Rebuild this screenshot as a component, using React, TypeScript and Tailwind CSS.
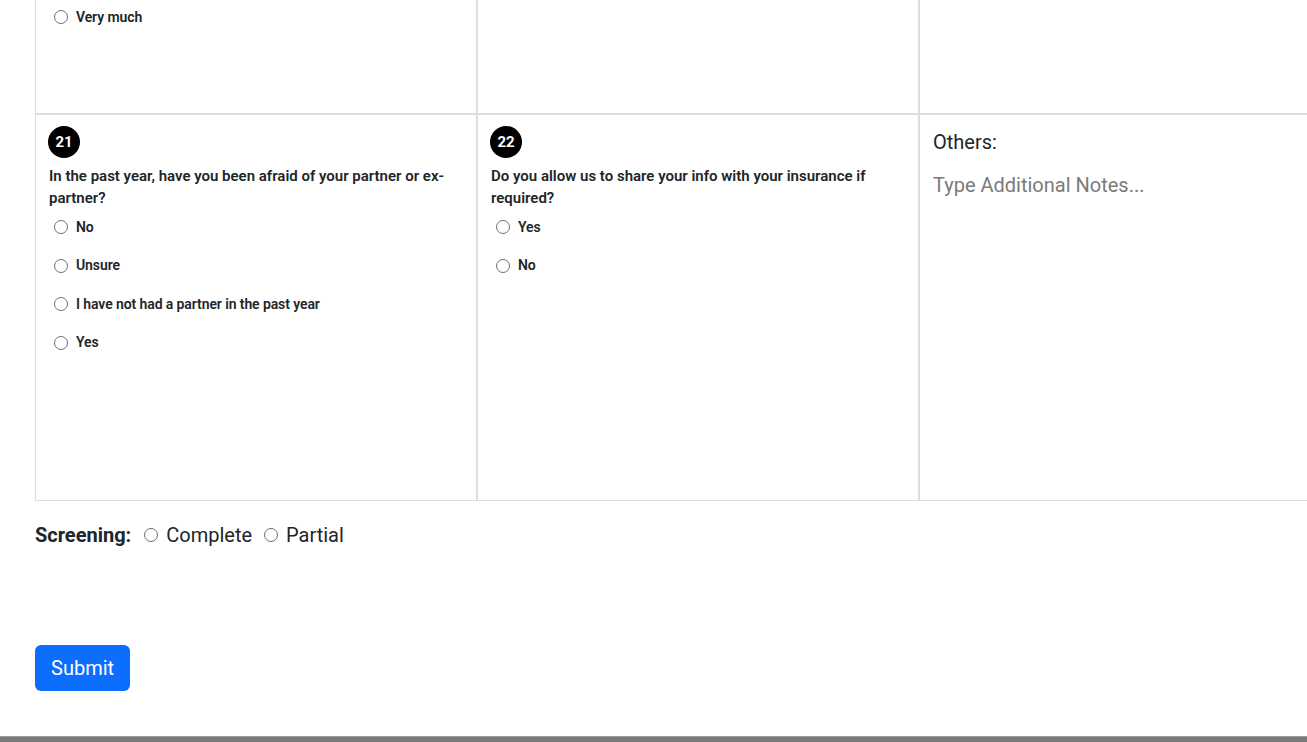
import React from 'react';

const font = { fontFamily: 'Roboto, "Liberation Sans", sans-serif' };

function Radio({ label }: { label: string }) {
  return (
    <label className="flex items-center h-[22px] pl-[6px] gap-[8px]">
      <span className="w-[14px] h-[14px] rounded-full border border-[#6f6f6f] bg-white shrink-0" />
      <span className="text-[14px] font-semibold text-[#212529] tracking-[-0.1px]">{label}</span>
    </label>
  );
}

function Badge({ n }: { n: number }) {
  return (
    <div className="w-[32px] h-[32px] rounded-full bg-black text-white flex items-center justify-center text-[15px] font-bold">
      {n}
    </div>
  );
}

function Question({ n, text, options }: { n: number; text: string; options: string[] }) {
  return (
    <div className="border border-[#dedede] h-[387px] pt-[11px] px-[12px]">
      <Badge n={n} />
      <p className="mt-[7px] pl-px text-[15px] leading-[22px] font-semibold text-[#212529] pr-[20px]">{text}</p>
      <div className="mt-[7px] flex flex-col gap-y-[16.5px]">
        {options.map((o) => (
          <Radio key={o} label={o} />
        ))}
      </div>
    </div>
  );
}

export default function App() {
  return (
    <div style={font} className="w-[1307px] h-[742px] overflow-hidden flex flex-col bg-white text-[#212529]">
      <div className="ml-[35px] w-[1326px]">
        <div className="grid grid-cols-3">
          <div className="border border-t-0 border-[#dedede] h-[114px] pt-[6px] px-[12px]">
            <Radio label="Very much" />
          </div>
          <div className="border border-t-0 border-[#dedede] h-[114px]" />
          <div className="border border-t-0 border-[#dedede] h-[114px]" />
          <Question
            n={21}
            text="In the past year, have you been afraid of your partner or ex-partner?"
            options={['No', 'Unsure', 'I have not had a partner in the past year', 'Yes']}
          />
          <Question
            n={22}
            text="Do you allow us to share your info with your insurance if required?"
            options={['Yes', 'No']}
          />
          <div className="border border-[#dedede] h-[387px] pt-[12px] px-[13px]">
            <div className="text-[20px] leading-[30px]">Others:</div>
            <textarea
              placeholder="Type Additional Notes..."
              className="mt-[13px] w-full h-[200px] resize-none outline-none text-[20px] leading-[30px] placeholder-[#7b7b7b]"
            />
          </div>
        </div>
        <div className="mt-[19px] flex items-center h-[30px] text-[20px]">
          <span className="font-bold">Screening:</span>
          <span className="ml-[13px] w-[14px] h-[14px] rounded-full border border-[#6f6f6f]" />
          <span className="ml-[8px]">Complete</span>
          <span className="ml-[12px] w-[14px] h-[14px] rounded-full border border-[#6f6f6f]" />
          <span className="ml-[8px]">Partial</span>
        </div>
        <button className="mt-[95px] h-[46px] px-[16px] rounded-[6px] bg-[#0d6efd] text-white text-[20px]">
          Submit
        </button>
      </div>
      <div className="mt-auto h-[6px] bg-[#7b7b7b] border-t border-[#9a9a9a]" />
    </div>
  );
}
